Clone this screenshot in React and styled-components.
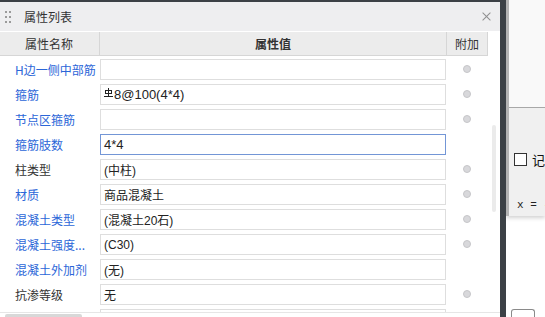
import React from 'react';
import styled, { createGlobalStyle } from 'styled-components';

const GlobalStyle = createGlobalStyle`
  html, body {
    margin: 0;
    padding: 0;
    background: #ffffff;
    overflow: hidden;
  }
  body {
    font-family: "Noto Sans", "Noto Sans CJK SC", sans-serif;
    font-size: 12px;
    color: #333;
  }
`;

const Screen = styled.div`
  display: flex;
  width: 545px;
  height: 317px;
  overflow: hidden;
  background: #fff;
`;

const Panel = styled.div`
  position: relative;
  width: 500px;
  flex-shrink: 0;
  display: flex;
  flex-direction: column;
  border-top: 2px solid #3c4046;
  box-sizing: border-box;
  background: #fff;
`;

const TitleBar = styled.div`
  height: 30px;
  box-sizing: border-box;
  display: flex;
  align-items: center;
  background: #eeeef0;
  border-bottom: 1px solid #ffffff;
  padding-left: 5px;
  padding-right: 10px;
`;

const Grip = styled.div`
  display: grid;
  grid-template-columns: 2px 2px;
  grid-auto-rows: 2px;
  column-gap: 2px;
  row-gap: 3px;
  margin-right: 13px;

  span {
    background: #9a9a9a;
  }
`;

const Title = styled.div`
  flex: 1;
  font-size: 12px;
  color: #333;
  font-family: "Noto Sans CJK SC", sans-serif;
`;

const Close = styled.div`
  position: relative;
  width: 9px;
  height: 9px;
  margin-right: -1px;

  &::before,
  &::after {
    content: '';
    position: absolute;
    left: -1px;
    top: 4px;
    width: 11px;
    height: 1px;
    background: #8f8f8f;
    transform: rotate(45deg);
  }
  &::after {
    transform: rotate(-45deg);
  }
`;

const Header = styled.div`
  display: grid;
  grid-template-columns: 100px 347px 41px;
  width: 488px;
  height: 24px;
  box-sizing: border-box;
  background: #ececec;
  border-bottom: 1px solid #d6d6d6;
`;

const HeadCell = styled.div`
  display: flex;
  align-items: center;
  justify-content: ${({ center }) => (center ? 'center' : 'flex-start')};
  padding-left: ${({ center }) => (center ? '0' : '25px')};
  border-right: 1px solid #d6d6d6;
  font-family: "Noto Sans CJK SC", sans-serif;
  font-weight: ${({ bold }) => (bold ? 700 : 400)};
  color: #333;
  white-space: nowrap;
`;

const Body = styled.div`
  flex: 1;
  display: flex;
  overflow: hidden;
`;

const Rows = styled.div`
  width: 488px;
  display: flex;
  flex-direction: column;
`;

const Row = styled.div`
  display: grid;
  grid-template-columns: 100px 346px 42px;
  height: 25px;
  flex-shrink: 0;
  align-items: start;
`;

const Label = styled.div`
  padding-left: 15px;
  padding-top: 5px;
  color: ${({ blue }) => (blue ? '#2b66d8' : '#333')};
  font-family: "Noto Sans CJK SC", sans-serif;
  white-space: nowrap;
  overflow: hidden;
`;

const ValueBox = styled.div`
  margin-top: 3px;
  height: 21px;
  box-sizing: border-box;
  border: 1px solid ${({ focused }) => (focused ? '#7396d6' : '#dedede')};
  background: #fff;
  display: flex;
  align-items: center;
  padding-left: 3px;
  font-family: "Liberation Sans", "Noto Sans CJK SC", sans-serif;
  font-size: ${({ latin }) => (latin ? '13px' : '12px')};
  color: #222;
  white-space: nowrap;
`;

const DotCell = styled.div`
  display: flex;
  justify-content: center;
  padding-top: 9px;
`;

const Dot = styled.span`
  width: 8px;
  height: 8px;
  border-radius: 50%;
  box-sizing: border-box;
  background: #d8d8db;
  border: 1px solid #c6c6c9;
`;

const Gutter = styled.div`
  flex: 1;
  display: flex;
  justify-content: flex-start;
  padding-left: 4px;
`;

const VThumb = styled.div`
  width: 4px;
  height: 87px;
  margin-top: 69px;
  border-radius: 2px;
  background: #ebebeb;
`;

const HScroll = styled.div`
  height: 5px;
  box-sizing: border-box;
  border-top: 1px solid #e6e6e6;
  padding-left: 5px;
  display: flex;
  align-items: flex-end;
`;

const HThumb = styled.div`
  width: 77px;
  height: 3px;
  border-radius: 2px 2px 0 0;
  background: #d8d8d8;
`;

const Divider = styled.div`
  width: 6px;
  flex-shrink: 0;
  background: #3c4146;
`;

const RightArea = styled.div`
  flex: 1;
  display: flex;
  flex-direction: column;
  background: #fff;
  overflow: hidden;
`;

const Dialog = styled.div`
  height: 216px;
  box-sizing: border-box;
  border-left: 3px solid #b3b3b3;
  display: flex;
  flex-direction: column;
  box-shadow: 0 2px 4px rgba(0, 0, 0, 0.18);
`;

const DialogTop = styled.div`
  height: 108px;
  box-sizing: border-box;
  background: #f9f9f9;
  border-bottom: 1px solid #a8a8a8;
`;

const DialogBottom = styled.div`
  flex: 1;
  background: #f0f0f0;
  display: flex;
  flex-direction: column;
  padding-left: 5px;
  padding-top: 42px;
  white-space: nowrap;
`;

const CheckRow = styled.div`
  display: flex;
  align-items: center;
  gap: 5px;
  font-family: "Noto Sans CJK SC", sans-serif;
  font-size: 13px;
  color: #111;
`;

const CheckBox = styled.span`
  width: 13px;
  height: 13px;
  box-sizing: border-box;
  border: 1px solid #333;
  background: #fff;
  flex-shrink: 0;
`;

const Formula = styled.div`
  margin-top: 30px;
  padding-left: 3px;
  font-family: "Liberation Mono", monospace;
  font-size: 11px;
  color: #222;
`;

const RightFooter = styled.div`
  margin-top: auto;
  height: 8px;
  display: flex;
  padding-left: 5px;
`;

const TabButton = styled.div`
  width: 24px;
  height: 9px;
  box-sizing: border-box;
  border: 1px solid #8a8a8a;
  border-bottom: none;
  border-radius: 3px 3px 0 0;
  background: #fff;
`;

const RebarMark = () => (
  <svg width="9" height="11" viewBox="0 0 9 11" style={{ marginRight: 1, marginTop: -3 }}>
    <rect x="1.5" y="2.5" width="6" height="3" fill="none" stroke="#222" strokeWidth="1" />
    <line x1="4.5" y1="0" x2="4.5" y2="9" stroke="#222" strokeWidth="1" />
    <line x1="0" y1="8.5" x2="9" y2="8.5" stroke="#222" strokeWidth="1" />
  </svg>
);

const rows = [
  { label: 'H边一侧中部筋', blue: true, value: '', dot: true },
  { label: '箍筋', blue: true, value: '8@100(4*4)', rebar: true, latin: true, dot: true },
  { label: '节点区箍筋', blue: true, value: '', dot: true },
  { label: '箍筋肢数', blue: true, value: '4*4', latin: true, focused: true, dot: false },
  { label: '柱类型', blue: false, value: '(中柱)', dot: true },
  { label: '材质', blue: true, value: '商品混凝土', dot: true },
  { label: '混凝土类型', blue: true, value: '(混凝土20石)', dot: true },
  { label: '混凝土强度...', blue: true, value: '(C30)', dot: true },
  { label: '混凝土外加剂', blue: true, value: '(无)', dot: false },
  { label: '抗渗等级', blue: false, value: '无', dot: true },
  { label: '', blue: false, value: '', dot: false },
];

export default function App() {
  return (
    <>
      <GlobalStyle />
      <Screen>
        <Panel>
          <TitleBar>
            <Grip>
              <span /><span /><span /><span /><span /><span />
            </Grip>
            <Title>属性列表</Title>
            <Close />
          </TitleBar>
          <Header>
            <HeadCell>属性名称</HeadCell>
            <HeadCell center bold>属性值</HeadCell>
            <HeadCell center>附加</HeadCell>
          </Header>
          <Body>
            <Rows>
              {rows.map((r, i) => (
                <Row key={i}>
                  <Label blue={r.blue}>{r.label}</Label>
                  <ValueBox focused={r.focused} latin={r.latin}>
                    {r.rebar && <RebarMark />}
                    {r.value}
                  </ValueBox>
                  <DotCell>{r.dot && <Dot />}</DotCell>
                </Row>
              ))}
            </Rows>
            <Gutter>
              <VThumb />
            </Gutter>
          </Body>
          <HScroll>
            <HThumb />
          </HScroll>
        </Panel>
        <Divider />
        <RightArea>
          <Dialog>
            <DialogTop />
            <DialogBottom>
              <CheckRow>
                <CheckBox />
                记录
              </CheckRow>
              <Formula>x = -12</Formula>
            </DialogBottom>
          </Dialog>
          <RightFooter>
            <TabButton />
          </RightFooter>
        </RightArea>
      </Screen>
    </>
  );
}
